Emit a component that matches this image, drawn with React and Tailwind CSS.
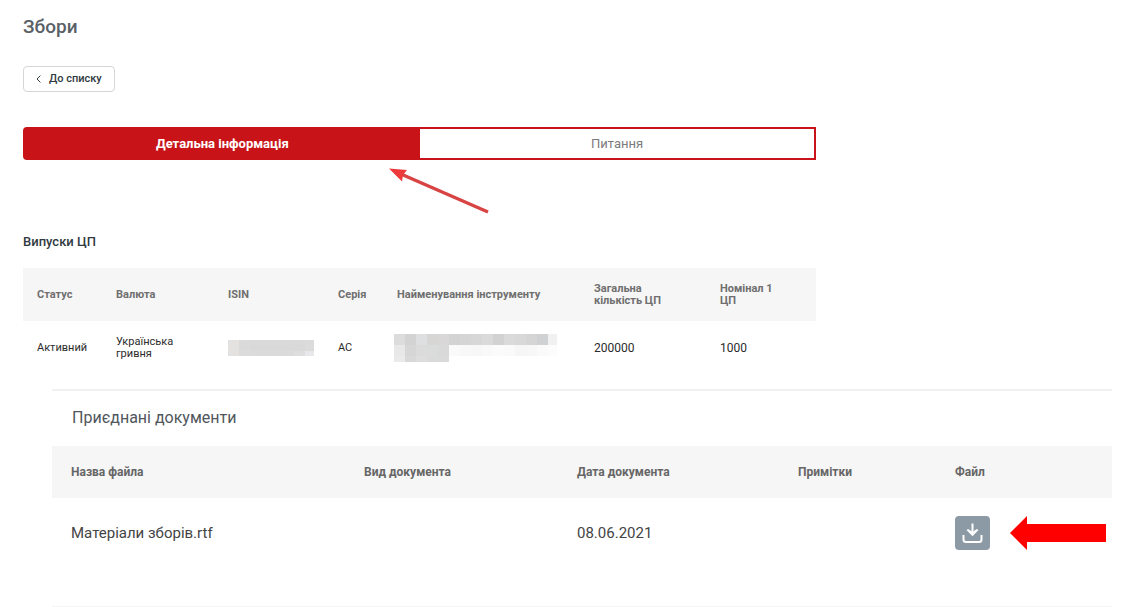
import { useState } from 'react';

const issueColumns = [
  { title: 'Статус', width: 'w-[79px]' },
  { title: 'Валюта', width: 'w-[112px]' },
  { title: 'ISIN', width: 'w-[110px]' },
  { title: 'Серія', width: 'w-[59px]' },
  { title: 'Найменування інструменту', width: 'w-[197px]' },
  { title: 'Загальна кількість ЦП', width: 'w-[126px] pr-8' },
  { title: 'Номінал 1 ЦП', width: 'w-auto pr-8' }
];

const documentColumns = [
  { title: 'Назва файла', width: 'w-[293px]' },
  { title: 'Вид документа', width: 'w-[213px]' },
  { title: 'Дата документа', width: 'w-[221px]' },
  { title: 'Примітки', width: 'w-[157px]' },
  { title: 'Файл', width: 'w-auto' }
];

const isinMask = [
  { y: 0, height: 11, cells: ['#e3e2e1', '#dadada', '#d9d9da', '#d9d9da', '#d9d9d9', '#d9d9d9', '#dad9d9', '#dbdbdb'] },
  { y: 11, height: 5, cells: ['#e3e2e1', '#dcdcdc', '#dbdbdb', '#dbdbdb', '#dbdbdb', '#dbdbdb', '#dedede', '#e8e8ea'] }
];

const nameMask = [
  {
    y: 0,
    height: 11,
    cells: ['#dcdcdc', '#d3d3d3', '#dedfe0', '#d8d5d5', '#d9d7d7', '#d3d3d4', '#d5d5d5', '#d7d7d7', '#dadada', '#d2d2d3', '#dadada', '#d8d8d8', '#d5d5d6', '#d0d1d3', '#f1f1f1']
  },
  {
    y: 11,
    height: 11,
    cells: ['#e8e8e8', '#d6d6d6', '#dbdbdb', '#d9dcdb', '#d9d9d9', '#fafafa', '#f8f8f8', '#f7f7f7', '#f9f9f9', '#fbfbfb', '#fafafa', '#f6f6f6', '#f7f7f7', '#fafafa', '#fcfcfc']
  },
  { y: 22, height: 6, cells: ['#eaeaea', '#d8d8d8', '#dddddd', '#dadada', '#dadada'] }
];

function Mask({ rows, cellWidth, className, label }) {
  return (
    <svg className={className} role="img" aria-label={label} shapeRendering="crispEdges">
      {rows.map((row) =>
        row.cells.map((color, i) => (
          <rect key={`${row.y}-${i}`} x={i * cellWidth} y={row.y} width={cellWidth} height={row.height} fill={color} />
        ))
      )}
    </svg>
  );
}

function Tab({ active, onClick, children }) {
  return (
    <button
      type="button"
      role="tab"
      aria-selected={active}
      onClick={onClick}
      className={`flex-1 text-center text-[13px] ${active ? 'bg-[#c81418] font-bold text-white' : 'bg-white text-[#7b7b7b]'}`}
    >
      {children}
    </button>
  );
}

function App() {
  const [tab, setTab] = useState('details');

  return (
    <main className="bg-white pl-[23px] font-['Roboto','Noto_Sans',sans-serif]">
      <div className="w-[calc(71%+1px)]">
        <h1 className="pt-[15px] text-[19px] leading-6 font-medium text-[#596066]">Збори</h1>

        <button
          type="button"
          className="mt-[27px] flex h-[26px] items-center gap-2 rounded border border-[#d6d6d6] bg-white px-3 text-[11px] font-medium text-[#2f3a40]"
        >
          <svg className="h-2 w-[5px]" viewBox="0 0 5 8" fill="none" stroke="currentColor">
            <path d="M4.4 0.6 L1 4 L4.4 7.4" />
          </svg>
          До списку
        </button>

        {/* Вкладки */}
        <div className="relative mt-[35px]">
          <div role="tablist" className="flex h-[33px] rounded-l-sm border-2 border-[#c81418] bg-[#c81418]">
            <Tab active={tab === 'details'} onClick={() => setTab('details')}>
              Детальна інформація
            </Tab>
            <Tab active={tab === 'questions'} onClick={() => setTab('questions')}>
              Питання
            </Tab>
          </div>
          <svg className="absolute top-10 left-[366px] h-12 w-[102px]" viewBox="0 0 102 48" aria-hidden="true">
            <path d="M13 7.5 L99 45" stroke="#d84343" strokeWidth="3.4" fill="none" />
            <path d="M0 1.5 L18 3 L14 8 L13 14.5 Z" fill="#ee3a3a" />
          </svg>
        </div>

        <h2 className="mt-[73px] text-[13px] leading-[18px] font-medium text-[#2f3a40]">Випуски ЦП</h2>

        <table className="mt-[17px] w-full table-fixed text-left text-[11px] leading-3">
          <thead>
            <tr className="h-[53px] bg-[#f6f6f6] text-[#6f6f6f]">
              {issueColumns.map((column) => (
                <th key={column.title} scope="col" className={`${column.width} pl-[14px] font-bold`}>
                  {column.title}
                </th>
              ))}
            </tr>
          </thead>
          <tbody>
            <tr className="h-[53px] text-[#2b2b2b]">
              <td className="pl-[14px]">Активний</td>
              <td className="pr-8 pl-[14px]">Українська гривня</td>
              <td className="pl-[14px]">
                <Mask rows={isinMask} cellWidth={11} className="h-4 w-[86px]" label="ISIN приховано" />
              </td>
              <td className="pl-[14px]">АС</td>
              <td className="pl-[11px]">
                <Mask rows={nameMask} cellWidth={11} className="h-7 w-[163px]" label="Назву приховано" />
              </td>
              <td className="pl-[14px] text-xs">200000</td>
              <td className="pl-[14px] text-xs">1000</td>
            </tr>
          </tbody>
        </table>
      </div>

      {/* Документи */}
      <section className="mt-[15px] mr-[27px] ml-[29px] border-t-2 border-[#f1f1f1]">
        <h2 className="pt-[17px] pl-5 text-base leading-5 text-[#50565c]">Приєднані документи</h2>

        <table className="mt-[18px] w-full table-fixed border-b border-[#f4f4f4] text-left">
          <thead>
            <tr className="h-[52px] bg-[#f6f6f6] text-xs text-[#666666]">
              {documentColumns.map((column) => (
                <th key={column.title} scope="col" className={`${column.width} pl-[19px] font-bold`}>
                  {column.title}
                </th>
              ))}
            </tr>
          </thead>
          <tbody>
            <tr className="text-[15px] text-[#444444]">
              <td className="pt-[18px] pb-14 pl-[19px]">Матеріали зборів.rtf</td>
              <td></td>
              <td className="pt-[18px] pb-14 pl-[19px]">08.06.2021</td>
              <td></td>
              <td className="pt-[18px] pb-14 pl-[19px]">
                <div className="flex items-center gap-5">
                  <button
                    type="button"
                    aria-label="Завантажити файл"
                    className="flex h-[34px] w-[35px] items-center justify-center rounded bg-[#8c9aa5] text-white"
                  >
                    <svg className="h-[21px] w-[21px]" viewBox="0 0 21 21" fill="none" stroke="currentColor" strokeWidth="2">
                      <path d="M10.5 0.5 V10" />
                      <path d="M4.5 7 L10.5 13.2 L16.5 7 L14.8 6 L10.5 9 L6.2 6 Z" fill="currentColor" stroke="none" />
                      <path d="M1.5 12 V16.5 Q1.5 19 4 19 H17 Q19.5 19 19.5 16.5 V12" />
                    </svg>
                  </button>
                  <svg className="h-[34px] w-24" viewBox="0 0 96 34" fill="#fe0000" aria-hidden="true">
                    <path d="M0 17 L17 0 V8 H96 V26 H17 V34 Z" />
                  </svg>
                </div>
              </td>
            </tr>
          </tbody>
        </table>
      </section>
    </main>
  );
}

export default App;
